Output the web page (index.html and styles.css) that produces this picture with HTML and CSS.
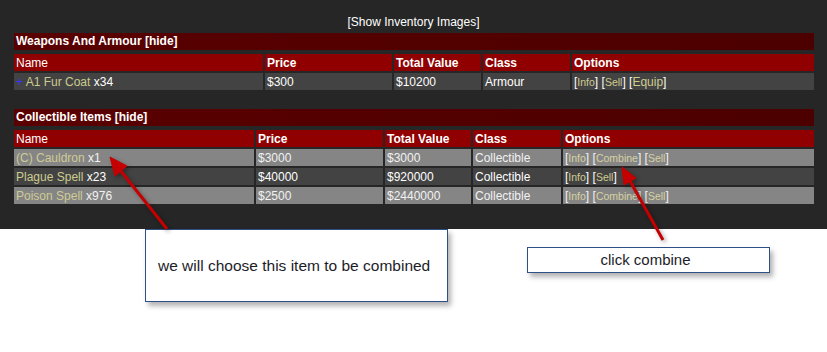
FILE: index.html
```html
<!doctype html>
<html>
    <head>
        <meta charset="utf-8" />
        <title>Inventory</title>
        <link rel="stylesheet" href="styles.css">
    </head>
    <body>
        <div class="inventory">
            <div class="toggle-images">[Show Inventory Images]</div>

            <div class="section-title">Weapons And Armour [hide]</div>
            <table class="items weapons">
                <tr>
                    <th class="c-name plain">Name</th>
                    <th class="c-price">Price</th>
                    <th class="c-total">Total Value</th>
                    <th class="c-class">Class</th>
                    <th class="c-opts">Options</th>
                </tr>
                <tr class="dark">
                    <td><span class="plus">+</span> <span class="item">A1 Fur Coat</span> x34</td>
                    <td>$300</td>
                    <td>$10200</td>
                    <td>Armour</td>
                    <td>[<a class="opt">Info</a>] [<a class="opt">Sell</a>] [<a class="opt big">Equip</a>]</td>
                </tr>
            </table>

            <div class="section-title second">Collectible Items [hide]</div>
            <table class="items collectibles">
                <tr>
                    <th class="c-name plain">Name</th>
                    <th class="c-price">Price</th>
                    <th class="c-total">Total Value</th>
                    <th class="c-class">Class</th>
                    <th class="c-opts">Options</th>
                </tr>
                <tr class="light">
                    <td><span class="item">(C) Cauldron</span> x1</td>
                    <td>$3000</td>
                    <td>$3000</td>
                    <td>Collectible</td>
                    <td>[<a class="opt">Info</a>] [<a class="opt">Combine</a>] [<a class="opt">Sell</a>]</td>
                </tr>
                <tr class="dark">
                    <td><span class="item">Plague Spell</span> x23</td>
                    <td>$40000</td>
                    <td>$920000</td>
                    <td>Collectible</td>
                    <td>[<a class="opt">Info</a>] [<a class="opt">Sell</a>]</td>
                </tr>
                <tr class="light">
                    <td><span class="item">Poison Spell</span> x976</td>
                    <td>$2500</td>
                    <td>$2440000</td>
                    <td>Collectible</td>
                    <td>[<a class="opt">Info</a>] [<a class="opt">Combine</a>] [<a class="opt">Sell</a>]</td>
                </tr>
            </table>
        </div>

        <div class="notes">
            <div class="note note-item">we will choose this item to be combined</div>
            <div class="note note-click">click combine</div>
        </div>

        <!-- callout arrows drawn over the table -->
        <svg class="arrows" width="827" height="352" viewBox="0 0 827 352">
            <g fill="#c40000" stroke="#c40000">
                <line x1="167" y1="229" x2="120" y2="170" stroke-width="3" />
                <polygon points="110,157 115,176 127,166" stroke-width="1" />
                <line x1="663" y1="240" x2="630" y2="181" stroke-width="3" />
                <polygon points="622,167 624,185 636,178" stroke-width="1" />
            </g>
        </svg>
    </body>
</html>
```

FILE: styles.css
```css
body {
    margin: 0;
    background: #fff;
    font-family: "Liberation Sans", Arial, sans-serif;
    font-size: 12px;
    position: relative;
}
.inventory {
    background: #262626;
    height: 214px;
    padding-top: 15px;
    color: #fff;
}
.toggle-images {
    text-align: center;
    line-height: 15px;
    margin-bottom: 3px;
}
.section-title {
    margin: 0 13px 0 14px;
    height: 17px;
    line-height: 17px;
    padding-left: 2px;
    font-weight: bold;
    background: linear-gradient(to right, #5a0000, #4c0000);
}
.section-title.second {
    margin-top: 17px;
}
.items {
    margin: 2px 11px 0 12px;
    width: 804px;
    table-layout: fixed;
    border-collapse: separate;
    border-spacing: 2px;
}
.items th,
.items td {
    box-sizing: border-box;
    height: 17px;
    line-height: 16px;
    padding: 1px 2px 0;
    text-align: left;
    white-space: nowrap;
    overflow: hidden;
}
.items th {
    background: #900000;
    font-weight: bold;
}
.items th.plain {
    font-weight: normal;
}
.weapons .c-name { width: 249px; }
.weapons .c-price { width: 127px; }
.weapons .c-total { width: 87px; }
.weapons .c-class { width: 87px; }
.weapons .c-opts { width: 242px; }
.collectibles .c-name { width: 240px; }
.collectibles .c-price { width: 127px; }
.collectibles .c-total { width: 86px; }
.collectibles .c-class { width: 88px; }
.collectibles .c-opts { width: 251px; }
.dark td {
    background: #434343;
}
.light td {
    background: #858585;
    color: #f2f2f2;
}
.plus {
    color: #3535ff;
}
.item {
    color: #cccc8e;
}
.light .item {
    color: #cfcb94;
}
.opt {
    color: #d0cc90;
    font-size: 10.5px;
}
.light .opt {
    color: #d6d2a2;
}
.opt.big {
    font-size: 12px;
}
.notes {
    position: relative;
    height: 123px;
}
.note {
    position: absolute;
    box-sizing: border-box;
    background: #fff;
    border: 1px solid #2e4f88;
    box-shadow: 3px 4px 5px rgba(0, 0, 0, 0.3);
    color: #1c1c28;
}
.note-item {
    left: 145px;
    top: 0;
    width: 303px;
    height: 73px;
    padding-left: 12px;
    font-size: 15.5px;
    line-height: 71px;
}
.note-click {
    left: 527px;
    top: 18px;
    width: 243px;
    height: 26px;
    padding-right: 6px;
    text-align: center;
    font-size: 15px;
    line-height: 24px;
}
.arrows {
    position: absolute;
    left: 0;
    top: 0;
    pointer-events: none;
    filter: drop-shadow(2px 2px 2px rgba(0, 0, 0, 0.35));
}
```
